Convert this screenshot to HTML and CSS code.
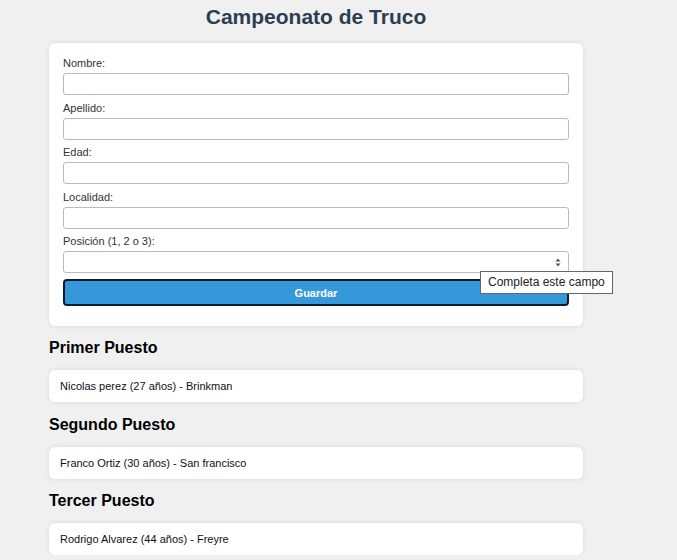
FILE: index.html
```html
<!DOCTYPE html>
<html lang="es">
<head>
<meta charset="utf-8">
<title>Campeonato de Truco</title>
<link rel="stylesheet" href="styles.css">
</head>
<body>
<div class="wrap">
  <h1 class="title">Campeonato de Truco</h1>
  <form class="card form">
    <div class="field">
      <label for="nombre">Nombre:</label>
      <input id="nombre" type="text">
    </div>
    <div class="field">
      <label for="apellido">Apellido:</label>
      <input id="apellido" type="text">
    </div>
    <div class="field">
      <label for="edad">Edad:</label>
      <input id="edad" type="text">
    </div>
    <div class="field">
      <label for="localidad">Localidad:</label>
      <input id="localidad" type="text">
    </div>
    <div class="field last">
      <label for="posicion">Posición (1, 2 o 3):</label>
      <div class="num">
        <input id="posicion" type="text">
        <svg class="spin" width="6" height="9" viewBox="0 0 6 9"><path d="M3 0.5 L5.5 3.5 H0.5 Z M3 8.5 L5.5 5.5 H0.5 Z" fill="#555"/></svg>
        <div class="tip">Completa este campo</div>
      </div>
    </div>
    <button type="button" class="btn">Guardar</button>
  </form>

  <h2 class="place first">Primer Puesto</h2>
  <div class="card result">Nicolas perez (27 años) - Brinkman</div>

  <h2 class="place">Segundo Puesto</h2>
  <div class="card result">Franco Ortiz (30 años) - San francisco</div>

  <h2 class="place">Tercer Puesto</h2>
  <div class="card result">Rodrigo Alvarez (44 años) - Freyre</div>
</div>
</body>
</html>
```

FILE: styles.css
```css
html, body {
  margin: 0;
  padding: 0;
  background: #f0f0f0;
  font-family: "Liberation Sans", Arial, sans-serif;
  color: #000;
}
.wrap {
  width: 534px;
  margin-left: 49px;
}
.title {
  margin: 0;
  padding-top: 5px;
  line-height: 24px;
  font-size: 21px;
  font-weight: bold;
  color: #2c3e50;
  text-align: center;
  margin-bottom: 14px;
}
.card {
  background: #fff;
  border-radius: 6px;
  box-shadow: 0 0 5px rgba(0,0,0,0.1);
}
.form {
  padding: 13px 14px 20px;
  display: flex;
  flex-direction: column;
}
.field {
  display: flex;
  flex-direction: column;
  margin-bottom: 5.5px;
}
.field.last { margin-bottom: 6px; }
.field label {
  font-size: 11px;
  line-height: 15px;
  color: #333;
  margin-bottom: 2px;
}
.field input {
  box-sizing: border-box;
  width: 100%;
  height: 22px;
  margin: 0;
  border: 1px solid #bbb;
  border-radius: 3px;
  background: #fff;
  font-size: 11px;
  padding: 2px 6px;
  outline: none;
}
.num { position: relative; }
.spin {
  position: absolute;
  left: 492px;
  top: 7px;
}
.tip {
  position: absolute;
  left: 417px;
  top: 20px;
  background: #fff;
  border: 1px solid #666;
  padding: 0 7px;
  height: 23px;
  box-sizing: border-box;
  line-height: 21px;
  font-size: 12px;
  color: #222;
  white-space: nowrap;
  z-index: 2;
}
.btn {
  box-sizing: border-box;
  width: 100%;
  height: 27px;
  border: 2px solid #0f1b2a;
  border-radius: 4px;
  background: #3498db;
  color: #fff;
  font-family: "Liberation Sans", Arial, sans-serif;
  font-weight: bold;
  font-size: 11px;
  padding: 0;
}
.place {
  margin: 12.5px 0 12px 0;
  font-size: 16px;
  line-height: 20px;
  font-weight: bold;
  color: #000;
}
.place.first { margin-top: 12px; }
.result {
  height: 32px;
  box-sizing: border-box;
  padding: 0 11px;
  display: flex;
  align-items: center;
  font-size: 11px;
  color: #111;
}
```
